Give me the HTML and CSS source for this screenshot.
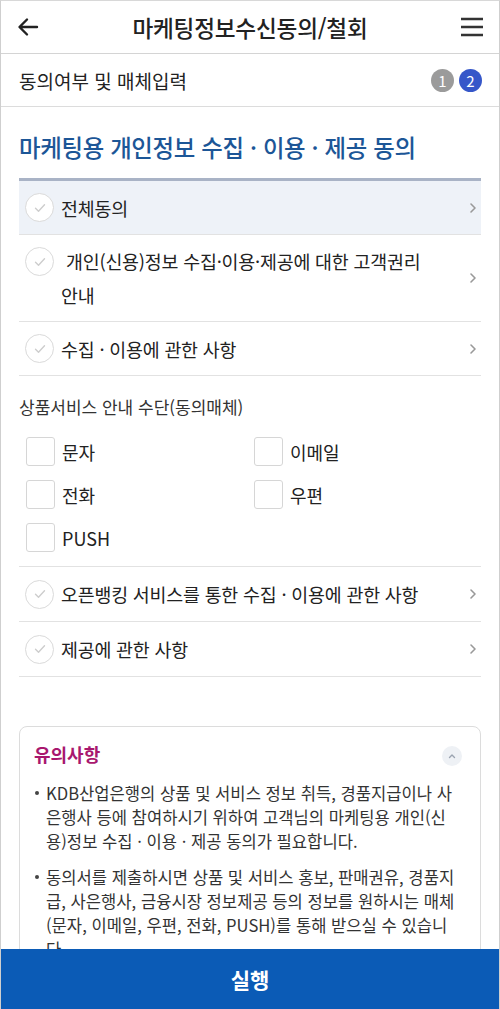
FILE: index.html
```html
<!DOCTYPE html>
<html lang="ko">
<head>
<meta charset="utf-8">
<title>마케팅정보수신동의/철회</title>
<link rel="stylesheet" href="styles.css">
</head>
<body>
<div class="page">
  <header class="topbar">
    <svg class="icon-back" width="22" height="22" viewBox="0 0 22 22"><path d="M20 11H3M10 3.5L2.5 11 10 18.5" fill="none" stroke="#222" stroke-width="2.4" stroke-linecap="round" stroke-linejoin="round"/></svg>
    <h1 class="topbar-title">마케팅정보수신동의/철회</h1>
    <svg class="icon-menu" width="22" height="20" viewBox="0 0 22 20"><path d="M0 2h22M0 10h22M0 18h22" stroke="#333" stroke-width="2.4"/></svg>
  </header>

  <div class="stepbar">
    <span class="step-title">동의여부 및 매체입력</span>
    <span class="steps"><span class="step done">1</span><span class="step on">2</span></span>
  </div>

  <main class="content">
    <h2 class="sec-title">마케팅용 개인정보 수집 · 이용 · 제공 동의</h2>

    <ul class="agree-list top">
      <li class="agree-row all">
        <span class="chk"><svg width="12" height="10" viewBox="0 0 12 10"><path d="M1.5 5.2l3 3L10.5 1.8" fill="none" stroke="#cdcdcd" stroke-width="1.4" stroke-linecap="round" stroke-linejoin="round"/></svg></span>
        <span class="row-text">전체동의</span>
        <svg class="chev" width="8" height="12" viewBox="0 0 8 12"><path d="M2 2l4 4-4 4" fill="none" stroke="#999" stroke-width="1.6" stroke-linecap="round" stroke-linejoin="round"/></svg>
      </li>
      <li class="agree-row multi">
        <span class="chk"><svg width="12" height="10" viewBox="0 0 12 10"><path d="M1.5 5.2l3 3L10.5 1.8" fill="none" stroke="#cdcdcd" stroke-width="1.4" stroke-linecap="round" stroke-linejoin="round"/></svg></span>
        <span class="row-text">&nbsp;개인(신용)정보 수집·이용·제공에 대한 고객권리 안내</span>
        <svg class="chev" width="8" height="12" viewBox="0 0 8 12"><path d="M2 2l4 4-4 4" fill="none" stroke="#999" stroke-width="1.6" stroke-linecap="round" stroke-linejoin="round"/></svg>
      </li>
      <li class="agree-row">
        <span class="chk"><svg width="12" height="10" viewBox="0 0 12 10"><path d="M1.5 5.2l3 3L10.5 1.8" fill="none" stroke="#cdcdcd" stroke-width="1.4" stroke-linecap="round" stroke-linejoin="round"/></svg></span>
        <span class="row-text">수집 · 이용에 관한 사항</span>
        <svg class="chev" width="8" height="12" viewBox="0 0 8 12"><path d="M2 2l4 4-4 4" fill="none" stroke="#999" stroke-width="1.6" stroke-linecap="round" stroke-linejoin="round"/></svg>
      </li>
    </ul>

    <p class="media-label">상품서비스 안내 수단(동의매체)</p>
    <div class="media-grid">
      <label class="media"><span class="box"></span>문자</label>
      <label class="media"><span class="box"></span>이메일</label>
      <label class="media"><span class="box"></span>전화</label>
      <label class="media"><span class="box"></span>우편</label>
      <label class="media"><span class="box"></span>PUSH</label>
    </div>

    <ul class="agree-list bottom">
      <li class="agree-row">
        <span class="chk"><svg width="12" height="10" viewBox="0 0 12 10"><path d="M1.5 5.2l3 3L10.5 1.8" fill="none" stroke="#cdcdcd" stroke-width="1.4" stroke-linecap="round" stroke-linejoin="round"/></svg></span>
        <span class="row-text">오픈뱅킹 서비스를 통한 수집 · 이용에 관한 사항</span>
        <svg class="chev" width="8" height="12" viewBox="0 0 8 12"><path d="M2 2l4 4-4 4" fill="none" stroke="#999" stroke-width="1.6" stroke-linecap="round" stroke-linejoin="round"/></svg>
      </li>
      <li class="agree-row">
        <span class="chk"><svg width="12" height="10" viewBox="0 0 12 10"><path d="M1.5 5.2l3 3L10.5 1.8" fill="none" stroke="#cdcdcd" stroke-width="1.4" stroke-linecap="round" stroke-linejoin="round"/></svg></span>
        <span class="row-text">제공에 관한 사항</span>
        <svg class="chev" width="8" height="12" viewBox="0 0 8 12"><path d="M2 2l4 4-4 4" fill="none" stroke="#999" stroke-width="1.6" stroke-linecap="round" stroke-linejoin="round"/></svg>
      </li>
    </ul>

    <section class="notice">
      <div class="notice-head">
        <h3 class="notice-title">유의사항</h3>
        <span class="fold"><svg width="8" height="6" viewBox="0 0 8 6"><path d="M1.5 4.5L4 2l2.5 2.5" fill="none" stroke="#9aa3b0" stroke-width="1.4" stroke-linecap="round" stroke-linejoin="round"/></svg></span>
      </div>
      <ul class="notice-list">
        <li>KDB산업은행의 상품 및 서비스 정보 취득, 경품지급이나 사은행사 등에 참여하시기 위하여 고객님의 마케팅용 개인(신용)정보 수집 · 이용 · 제공 동의가 필요합니다.</li>
        <li>동의서를 제출하시면 상품 및 서비스 홍보, 판매권유, 경품지급, 사은행사, 금융시장 정보제공 등의 정보를 원하시는 매체(문자, 이메일, 우편, 전화, PUSH)를 통해 받으실 수 있습니다.</li>
      </ul>
    </section>
  </main>

  <button class="submit">실행</button>
</div>
</body>
</html>
```
FILE: styles.css
```css
* { box-sizing: border-box; }
html, body { margin: 0; padding: 0; background: #fff; }
body {
  font-family: "Noto Sans CJK KR", "Noto Sans", sans-serif;
  color: #222;
}
.page {
  position: relative;
  width: 500px;
  height: 1009px;
  overflow: hidden;
  border-left: 1px solid #cfcfcf;
  border-right: 1px solid #cfcfcf;
  border-top: 1px solid #d8d8d8;
}
.topbar {
  height: 53px;
  display: flex;
  align-items: center;
  justify-content: space-between;
  padding: 0 16px 0 16px;
  border-bottom: 1px solid #d4d4d4;
}
.icon-back { display: block; }
.icon-menu { display: block; }
.topbar-title {
  margin: 0;
  font-size: 22.6px;
  font-weight: 500;
  color: #222;
  letter-spacing: -0.2px;
}
.stepbar {
  height: 53px;
  display: flex;
  align-items: center;
  justify-content: space-between;
  padding: 0 17px 0 18px;
  border-bottom: 1px solid #dcdcdc;
}
.step-title { font-size: 19px; color: #222; }
.steps { display: flex; gap: 5px; }
.step {
  width: 23px;
  height: 23px;
  border-radius: 50%;
  color: #fff;
  font-size: 15px;
  display: flex;
  align-items: center;
  justify-content: center;
  line-height: 1;
}
.step.done { background: #9b9b9b; }
.step.on { background: #3657c9; }

.content { padding: 0 18px 0 18px; }
.sec-title {
  margin: 0;
  padding: 23px 0 13px;
  font-size: 23.4px;
  font-weight: 500;
  color: #1c5697;
  line-height: 35px;
  letter-spacing: -0.3px;
}
.agree-list { list-style: none; margin: 0; padding: 0; }
.agree-list.top { border-top: 3px solid #a9b3c6; }
.agree-list.bottom { border-top: 1px solid #e2e2e2; margin-top: 7px; }
.agree-list.bottom .agree-row { min-height: 55px; }
.agree-row {
  display: flex;
  align-items: center;
  min-height: 54px;
  padding: 0 4px 0 6px;
  border-bottom: 1px solid #e2e2e2;
}
.agree-row.all { background: #eef2f8; }
.agree-row.multi { align-items: flex-start; padding-top: 9px; padding-bottom: 9px; }
.agree-row.multi .chk { margin-top: 3px; }
.agree-row.multi .chev { align-self: center; }
.chk {
  flex: none;
  width: 29px;
  height: 29px;
  border-radius: 50%;
  border: 1px solid #dadada;
  background: #fff;
  display: flex;
  align-items: center;
  justify-content: center;
}
.row-text {
  flex: 1;
  padding-left: 7px;
  padding-right: 14px;
  font-size: 18.4px;
  line-height: 34px;
  color: #222;
  letter-spacing: -0.2px;
  word-break: keep-all;
}
.chev { flex: none; }

.media-label {
  margin: 19px 0 0;
  font-size: 17px;
  line-height: 24px;
  color: #333;
}
.media-grid {
  display: grid;
  grid-template-columns: 228px 1fr;
  margin-top: 11px;
  padding-left: 7px;
}
.media {
  display: flex;
  align-items: center;
  height: 43px;
  font-size: 18px;
  color: #222;
}
.box {
  width: 29px;
  height: 29px;
  border: 1px solid #d6d6d6;
  border-radius: 3px;
  margin-right: 7px;
  background: #fff;
}

.notice {
  margin-top: 49px;
  border: 1px solid #dcdcdc;
  border-radius: 8px;
  padding: 12px 14px 20px 14px;
}
.notice-head {
  display: flex;
  align-items: center;
  justify-content: space-between;
}
.notice-title {
  margin: 0;
  font-size: 18px;
  font-weight: 700;
  color: #a8176e;
  line-height: 30px;
}
.fold {
  width: 20px;
  height: 20px;
  border-radius: 50%;
  background: #eef1f5;
  display: flex;
  align-items: center;
  justify-content: center;
  margin-right: 4px;
  margin-top: 4px;
}
.notice-list {
  list-style: none;
  margin: 12px 0 0;
  padding: 0;
}
.notice-list li {
  position: relative;
  padding-left: 12px;
  font-size: 16.6px;
  line-height: 24px;
  color: #333;
  word-break: break-all;
  margin-bottom: 12px;
}
.notice-list li::before {
  content: "";
  position: absolute;
  left: 1px;
  top: 10px;
  width: 4px;
  height: 4px;
  border-radius: 50%;
  background: #444;
}
.submit {
  position: absolute;
  left: -1px;
  right: -1px;
  bottom: 0;
  height: 60px;
  border: 0;
  background: #0b5bb6;
  color: #fff;
  font-family: "Noto Sans CJK KR", sans-serif;
  font-size: 21px;
  font-weight: 700;
  cursor: pointer;
}
```
